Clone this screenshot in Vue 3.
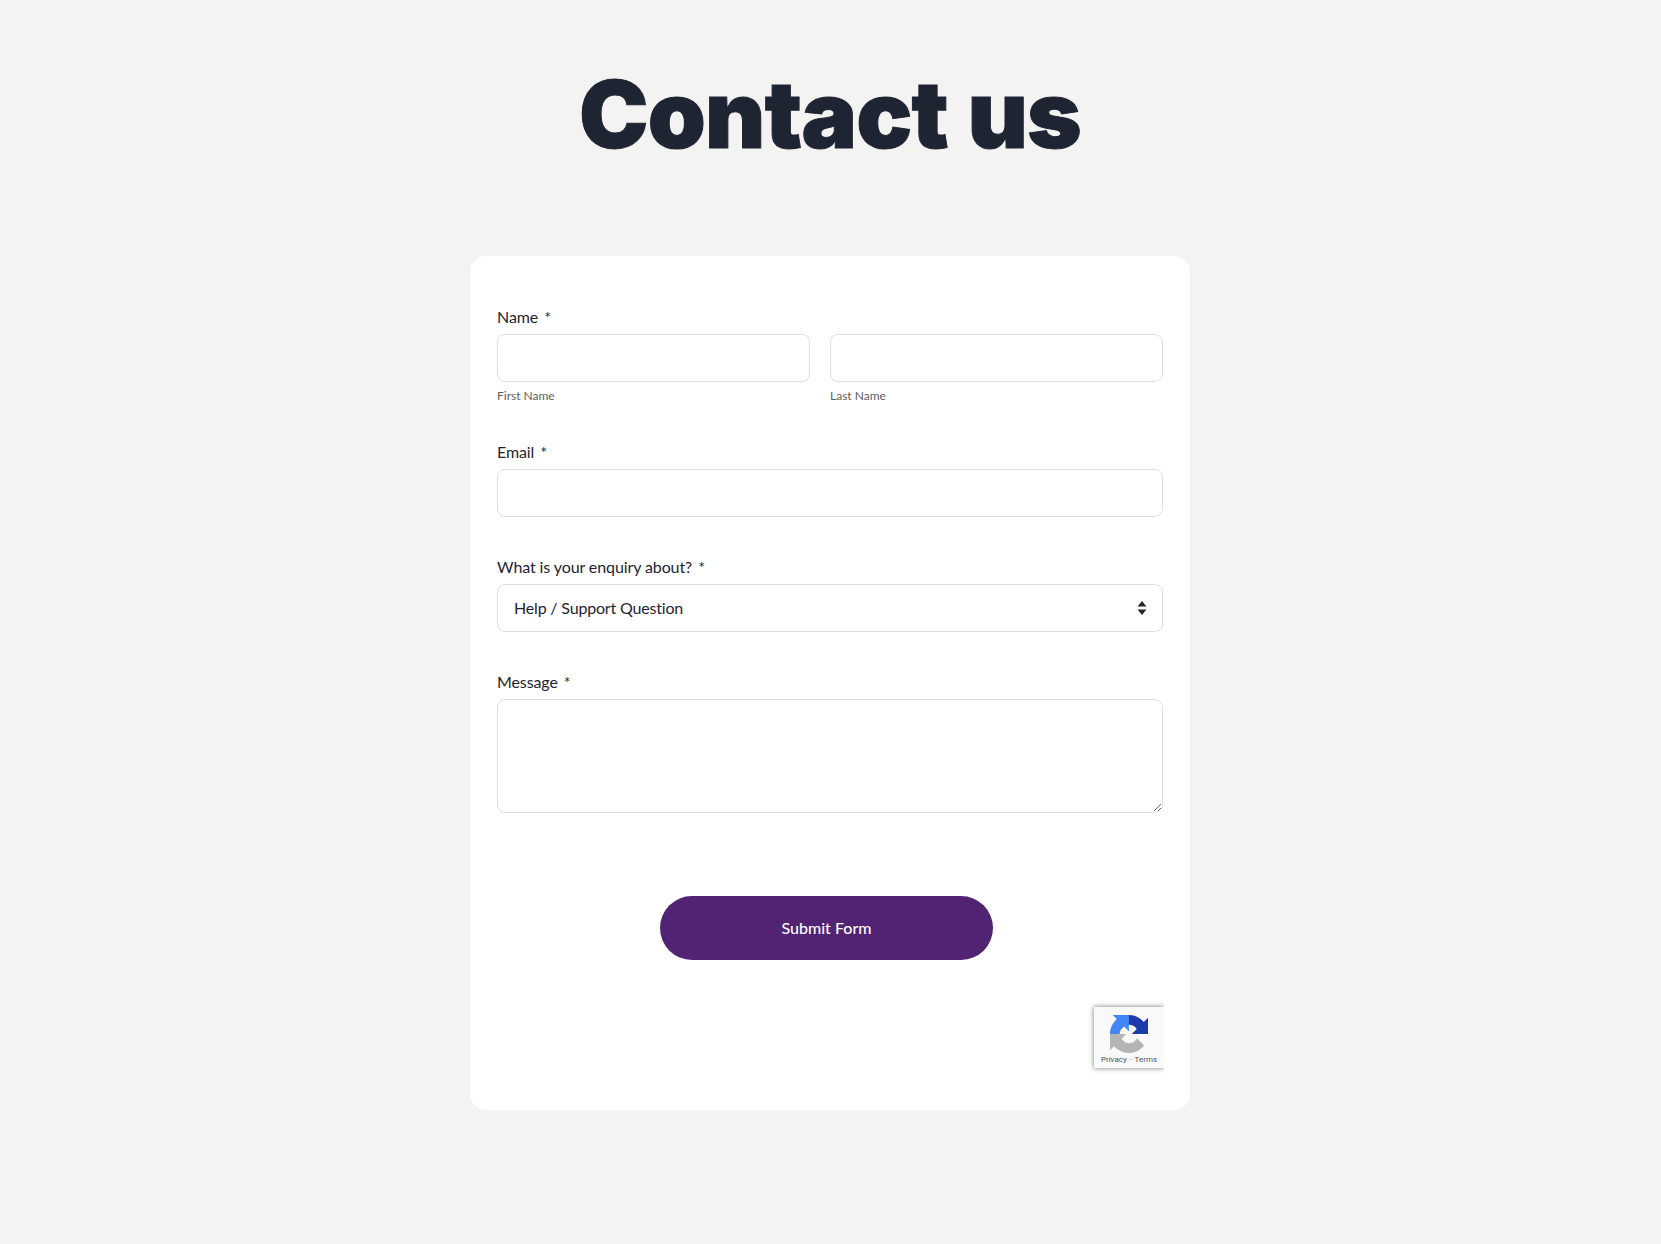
<script setup>
const subjects = ['Help / Support Question', 'Sales Question', 'Other']
</script>

<template>
  <main class="page">
    <h1 class="title">Contact us</h1>

    <form class="card" @submit.prevent>
      <div class="field field-name">
        <label class="label">Name <span class="req">*</span></label>
        <div class="name-row">
          <div>
            <input class="input" type="text" />
            <span class="sub">First Name</span>
          </div>
          <div>
            <input class="input" type="text" />
            <span class="sub">Last Name</span>
          </div>
        </div>
      </div>

      <div class="field">
        <label class="label">Email <span class="req">*</span></label>
        <input class="input" type="email" />
      </div>

      <div class="field">
        <label class="label">What is your enquiry about? <span class="req">*</span></label>
        <div class="select-wrap">
          <select class="input select">
            <option v-for="s in subjects" :key="s">{{ s }}</option>
          </select>
          <svg class="select-arrows" width="10" height="14" viewBox="0 0 10 14">
            <path d="M5 0L9.5 5.6H.5z" fill="#1f2433" />
            <path d="M5 14L.5 8.4h9z" fill="#1f2433" />
          </svg>
        </div>
      </div>

      <div class="field field-message">
        <label class="label">Message <span class="req">*</span></label>
        <textarea class="input textarea"></textarea>
      </div>

      <button class="submit" type="submit">Submit Form</button>

      <div class="recaptcha">
        <svg class="recaptcha-logo" width="38" height="38" viewBox="0 0 64 64">
          <path d="M64 31.955l-.033-1.37V4.687l-7.16 7.16C50.948 4.674 42.033.093 32.05.093c-10.4 0-19.622 4.96-25.458 12.64l11.736 11.86a15.55 15.55 0 0 1 4.754-5.334c2.05-1.6 4.952-2.906 8.968-2.906.485 0 .86.057 1.135.163 4.976.393 9.288 3.14 11.828 7.124l-8.307 8.307 32.294.008" fill="#1c3aa9" />
          <path d="M31.862.002l-1.37.033H4.594l7.16 7.16C4.58 13.054 0 21.97 0 31.953c0 10.4 4.96 19.622 12.64 25.458l11.86-11.736a15.55 15.55 0 0 1-5.334-4.754c-1.6-2.05-2.906-4.952-2.906-8.968 0-.485.057-.86.163-1.135.393-4.976 3.14-9.288 7.124-11.828l8.307 8.307.008-32.294" fill="#4285f4" />
          <path d="M.002 31.953l.033 1.37v25.898l7.16-7.16c5.86 7.173 14.775 11.754 24.76 11.754 10.4 0 19.622-4.96 25.458-12.64l-11.736-11.86a15.55 15.55 0 0 1-4.754 5.334c-2.05 1.6-4.952 2.906-8.968 2.906-.485 0-.86-.057-1.135-.163-4.976-.393-9.288-3.14-11.828-7.124l8.307-8.307-32.294-.008" fill="#b5b5b5" />
        </svg>
        <span class="recaptcha-links">Privacy · Terms</span>
      </div>
    </form>
  </main>
</template>

<style scoped>
.page {
  min-height: 1244px;
  box-sizing: border-box;
  padding: 56px 1px 0 0;
  background: #f3f3f1;
  color: #1f2433;
  font-family: Lato, "Liberation Sans", sans-serif;
}

.title {
  margin: 0;
  height: 120px;
  font-family: Inter, "Liberation Sans", sans-serif;
  font-size: 93px;
  font-weight: 900;
  line-height: 116px;
  letter-spacing: -0.8px;
  word-spacing: 2px;
  text-align: center;
  -webkit-text-stroke: 1px #1f2433;
}

.card {
  box-sizing: border-box;
  width: 720px;
  height: 854px;
  margin: 80px auto 0;
  padding: 49px 27px 0;
  background: #fff;
  border-radius: 16px;
}

.field {
  margin-bottom: 38px;
}

.field-name {
  margin-bottom: 36px;
}

.field-message {
  margin-bottom: 83px;
}

.label {
  display: block;
  margin-bottom: 5px;
  font-size: 16px;
  line-height: 24px;
  letter-spacing: -0.1px;
}

.req {
  margin-left: 2px;
}

.name-row {
  display: grid;
  grid-template-columns: 313px 333px;
  gap: 20px;
}

.input {
  display: block;
  box-sizing: border-box;
  width: 100%;
  height: 48px;
  padding: 0 16px;
  background: #fff;
  border: 1px solid #dfdfdc;
  border-radius: 8px;
  color: #1f2433;
  font-family: inherit;
  font-size: 16px;
  outline: none;
}

.sub {
  display: block;
  margin-top: 6px;
  color: #5c5f66;
  font-size: 12px;
  line-height: 16px;
}

.select-wrap {
  position: relative;
}

.select {
  appearance: none;
  padding-bottom: 2px;
  letter-spacing: -0.18px;
}

.select-arrows {
  position: absolute;
  top: 17px;
  right: 16px;
}

.textarea {
  height: 114px;
  padding: 12px 16px;
  resize: vertical;
}

.submit {
  display: block;
  width: 333px;
  height: 64px;
  margin: 0 0 47px 163px;
  padding: 0 0 2px;
  background: #522373;
  border: 0;
  border-radius: 32px;
  color: #fff;
  font-family: inherit;
  font-size: 16px;
  font-weight: 500;
}

.recaptcha {
  display: flex;
  flex-direction: column;
  align-items: center;
  box-sizing: border-box;
  width: 70px;
  height: 61px;
  margin: 0 -1px 0 auto;
  padding-top: 8px;
  background: #f9f9f9;
  box-shadow: 0 0 5px rgba(0, 0, 0, 0.55);
  clip-path: inset(-8px 0 -8px -8px);
}

.recaptcha-logo {
  flex: none;
}

.recaptcha-links {
  margin-top: 2px;
  color: #555;
  font-family: Roboto, "Liberation Sans", sans-serif;
  font-size: 8px;
  line-height: 10px;
  word-spacing: 1px;
  white-space: nowrap;
}
</style>

<style>
body {
  background: #f3f3f1;
}
</style>
